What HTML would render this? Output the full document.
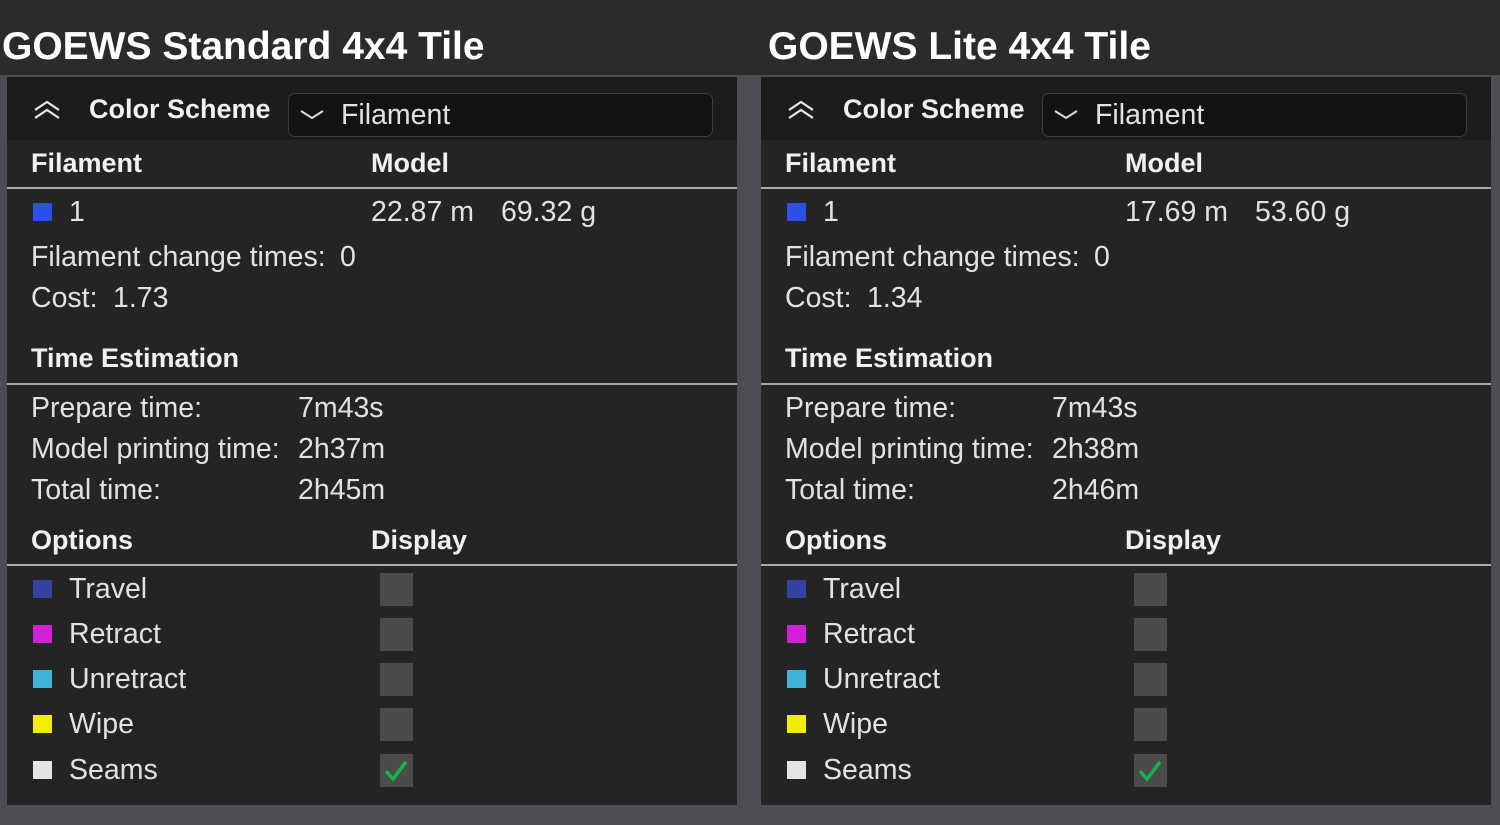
<!DOCTYPE html>
<html><head><meta charset="utf-8"><style>
*{margin:0;padding:0;box-sizing:border-box}
body{width:1500px;height:825px;background:#4d4d53;font-family:"Liberation Sans",sans-serif;color:#e6e6e6;position:relative;overflow:hidden}
.top{position:absolute;left:0;top:0;width:1500px;height:75px;background:#2b2b2e}
.title{position:absolute;top:26px;font-size:39px;font-weight:bold;color:#fff;line-height:42px;white-space:nowrap}
.panel{position:absolute;top:77px;width:730px;height:728px;background:#242424}
.hdr{position:absolute;left:0;top:0;width:730px;height:63px;background:#1c1c1c}
.t{position:absolute;font-size:28.5px;line-height:32px;white-space:nowrap;color:#e2e2e2}
.b{font-weight:bold;color:#f0f0f0;font-size:27px}
.dd{position:absolute;left:281px;top:16px;width:425px;height:44px;background:#131313;border:1.5px solid #3c3c3c;border-radius:7px}
.line{position:absolute;left:0;width:730px;height:2px;background:#a9a9a9}
.sw{position:absolute;width:19px;height:18px;left:26px}
.cb{position:absolute;left:373px;width:33px;height:33px;background:#4b4b4b}
</style></head><body>
<div class="top"></div>
<div class="title" style="left:2px">GOEWS Standard 4x4 Tile</div>
<div class="title" style="left:768px">GOEWS Lite 4x4 Tile</div>

<!-- LEFT PANEL -->
<div class="panel" style="left:7px">
 <div class="hdr"></div>
 <svg style="position:absolute;left:26px;top:22px" width="28" height="22" viewBox="0 0 28 22"><path d="M2 11 L14 3 L26 11 M2 19 L14 11 L26 19" fill="none" stroke="#e8e8e8" stroke-width="2.2"/></svg>
 <div class="t b" style="left:82px;top:16px">Color Scheme</div>
 <div class="dd"><svg style="position:absolute;left:10px;top:14px" width="26" height="14" viewBox="0 0 26 14"><path d="M2 3 L13 10 L24 3" fill="none" stroke="#ddd" stroke-width="2"/></svg><div class="t" style="left:52px;top:5px">Filament</div></div>
 <div class="t b" style="left:24px;top:70px">Filament</div>
 <div class="t b" style="left:364px;top:70px">Model</div>
 <div class="line" style="top:110px"></div>
 <div class="sw" style="top:126px;background:#2a50e8"></div>
 <div class="t" style="left:62px;top:119px">1</div>
 <div class="t" style="left:364px;top:119px">22.87 m</div>
 <div class="t" style="left:494px;top:119px">69.32 g</div>
 <div class="t" style="left:24px;top:164px">Filament change times:</div><div class="t" style="left:333px;top:164px">0</div>
 <div class="t" style="left:24px;top:205px">Cost:</div><div class="t" style="left:106px;top:205px">1.73</div>
 <div class="t b" style="left:24px;top:265px">Time Estimation</div>
 <div class="line" style="top:306px"></div>
 <div class="t" style="left:24px;top:315px">Prepare time:</div><div class="t" style="left:291px;top:315px">7m43s</div>
 <div class="t" style="left:24px;top:356px">Model printing time:</div><div class="t" style="left:291px;top:356px">2h37m</div>
 <div class="t" style="left:24px;top:397px">Total time:</div><div class="t" style="left:291px;top:397px">2h45m</div>
 <div class="t b" style="left:24px;top:447px">Options</div>
 <div class="t b" style="left:364px;top:447px">Display</div>
 <div class="line" style="top:487px"></div>
 <div class="sw" style="top:503px;background:#3543a0"></div><div class="t" style="left:62px;top:496px">Travel</div><div class="cb" style="top:496px"></div>
 <div class="sw" style="top:548px;background:#d21fd8"></div><div class="t" style="left:62px;top:541px">Retract</div><div class="cb" style="top:541px"></div>
 <div class="sw" style="top:593px;background:#3fb3d8"></div><div class="t" style="left:62px;top:586px">Unretract</div><div class="cb" style="top:586px"></div>
 <div class="sw" style="top:638px;background:#f2ec00"></div><div class="t" style="left:62px;top:631px">Wipe</div><div class="cb" style="top:631px"></div>
 <div class="sw" style="top:684px;background:#e4e4e4"></div><div class="t" style="left:62px;top:677px">Seams</div><div class="cb" style="top:677px"><svg width="33" height="33" viewBox="0 0 33 33"><path d="M6 17 L13 25 L26 8" fill="none" stroke="#17b24a" stroke-width="3.5"/></svg></div>
</div>

<!-- RIGHT PANEL -->
<div class="panel" style="left:761px">
 <div class="hdr"></div>
 <svg style="position:absolute;left:26px;top:22px" width="28" height="22" viewBox="0 0 28 22"><path d="M2 11 L14 3 L26 11 M2 19 L14 11 L26 19" fill="none" stroke="#e8e8e8" stroke-width="2.2"/></svg>
 <div class="t b" style="left:82px;top:16px">Color Scheme</div>
 <div class="dd"><svg style="position:absolute;left:10px;top:14px" width="26" height="14" viewBox="0 0 26 14"><path d="M2 3 L13 10 L24 3" fill="none" stroke="#ddd" stroke-width="2"/></svg><div class="t" style="left:52px;top:5px">Filament</div></div>
 <div class="t b" style="left:24px;top:70px">Filament</div>
 <div class="t b" style="left:364px;top:70px">Model</div>
 <div class="line" style="top:110px"></div>
 <div class="sw" style="top:126px;background:#2a50e8"></div>
 <div class="t" style="left:62px;top:119px">1</div>
 <div class="t" style="left:364px;top:119px">17.69 m</div>
 <div class="t" style="left:494px;top:119px">53.60 g</div>
 <div class="t" style="left:24px;top:164px">Filament change times:</div><div class="t" style="left:333px;top:164px">0</div>
 <div class="t" style="left:24px;top:205px">Cost:</div><div class="t" style="left:106px;top:205px">1.34</div>
 <div class="t b" style="left:24px;top:265px">Time Estimation</div>
 <div class="line" style="top:306px"></div>
 <div class="t" style="left:24px;top:315px">Prepare time:</div><div class="t" style="left:291px;top:315px">7m43s</div>
 <div class="t" style="left:24px;top:356px">Model printing time:</div><div class="t" style="left:291px;top:356px">2h38m</div>
 <div class="t" style="left:24px;top:397px">Total time:</div><div class="t" style="left:291px;top:397px">2h46m</div>
 <div class="t b" style="left:24px;top:447px">Options</div>
 <div class="t b" style="left:364px;top:447px">Display</div>
 <div class="line" style="top:487px"></div>
 <div class="sw" style="top:503px;background:#3543a0"></div><div class="t" style="left:62px;top:496px">Travel</div><div class="cb" style="top:496px"></div>
 <div class="sw" style="top:548px;background:#d21fd8"></div><div class="t" style="left:62px;top:541px">Retract</div><div class="cb" style="top:541px"></div>
 <div class="sw" style="top:593px;background:#3fb3d8"></div><div class="t" style="left:62px;top:586px">Unretract</div><div class="cb" style="top:586px"></div>
 <div class="sw" style="top:638px;background:#f2ec00"></div><div class="t" style="left:62px;top:631px">Wipe</div><div class="cb" style="top:631px"></div>
 <div class="sw" style="top:684px;background:#e4e4e4"></div><div class="t" style="left:62px;top:677px">Seams</div><div class="cb" style="top:677px"><svg width="33" height="33" viewBox="0 0 33 33"><path d="M6 17 L13 25 L26 8" fill="none" stroke="#17b24a" stroke-width="3.5"/></svg></div>
</div>
</body></html>
